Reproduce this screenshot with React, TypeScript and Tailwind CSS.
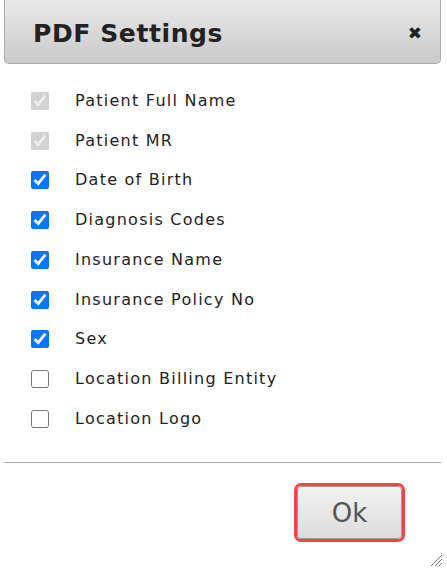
import React from "react";

const items: { label: string; checked: boolean; disabled?: boolean }[] = [
  { label: "Patient Full Name", checked: true, disabled: true },
  { label: "Patient MR", checked: true, disabled: true },
  { label: "Date of Birth", checked: true },
  { label: "Diagnosis Codes", checked: true },
  { label: "Insurance Name", checked: true },
  { label: "Insurance Policy No", checked: true },
  { label: "Sex", checked: true },
  { label: "Location Billing Entity", checked: false },
  { label: "Location Logo", checked: false },
];

export default function App() {
  return (
    <div className="w-[447px] h-[573px] bg-white overflow-hidden" style={{ fontFamily: '"DejaVu Sans", Verdana, sans-serif' }}>
      <div className="relative ml-[4px] w-[437px] h-[573px]">
        <div className="h-[64px] flex items-center justify-between pl-[28px] pr-[18px] pt-[3px] border border-t-0 border-[#aaaaaa] rounded-b-[5px] bg-gradient-to-b from-[#e9e9e9] to-[#c9c9c9]">
          <span className="text-[25px] font-bold text-[#222222] leading-none tracking-[0.6px]">PDF Settings</span>
          <span className="text-[17px] font-bold text-[#222222] leading-none">✖</span>
        </div>
        <div className="pt-[17px] flex flex-col">
          {items.map((it) => (
            <label key={it.label} className="h-[39.75px] flex items-center pl-[27px]">
              <input
                type="checkbox"
                defaultChecked={it.checked}
                disabled={it.disabled}
                className="w-[18px] h-[18px] m-0"
              />
              <span className="ml-[26px] text-[16px] text-[#222222] tracking-[1.25px]">{it.label}</span>
            </label>
          ))}
        </div>
        <div className="mt-[23px] h-px bg-[#aaaaaa]" />
        <div className="flex justify-end pr-[36px] pt-[20px]">
          <div className="rounded-[7px] border-[3px] border-[#f04545] p-0">
            <button className="w-[105px] h-[53px] rounded-[4px] border border-[#9a9a9a] bg-gradient-to-b from-[#f2f2f2] to-[#dcdcdc] text-[26px] text-[#555555] leading-none pt-[2px]">
              Ok
            </button>
          </div>
        </div>
        <svg className="absolute right-[-2px] bottom-[6px]" width="16" height="16" viewBox="0 0 16 16">
          <line x1="4" y1="15" x2="15" y2="4" stroke="#777" strokeWidth="1" />
          <line x1="8" y1="15" x2="15" y2="8" stroke="#777" strokeWidth="1" />
          <line x1="12" y1="15" x2="15" y2="12" stroke="#777" strokeWidth="1" />
        </svg>
      </div>
    </div>
  );
}
